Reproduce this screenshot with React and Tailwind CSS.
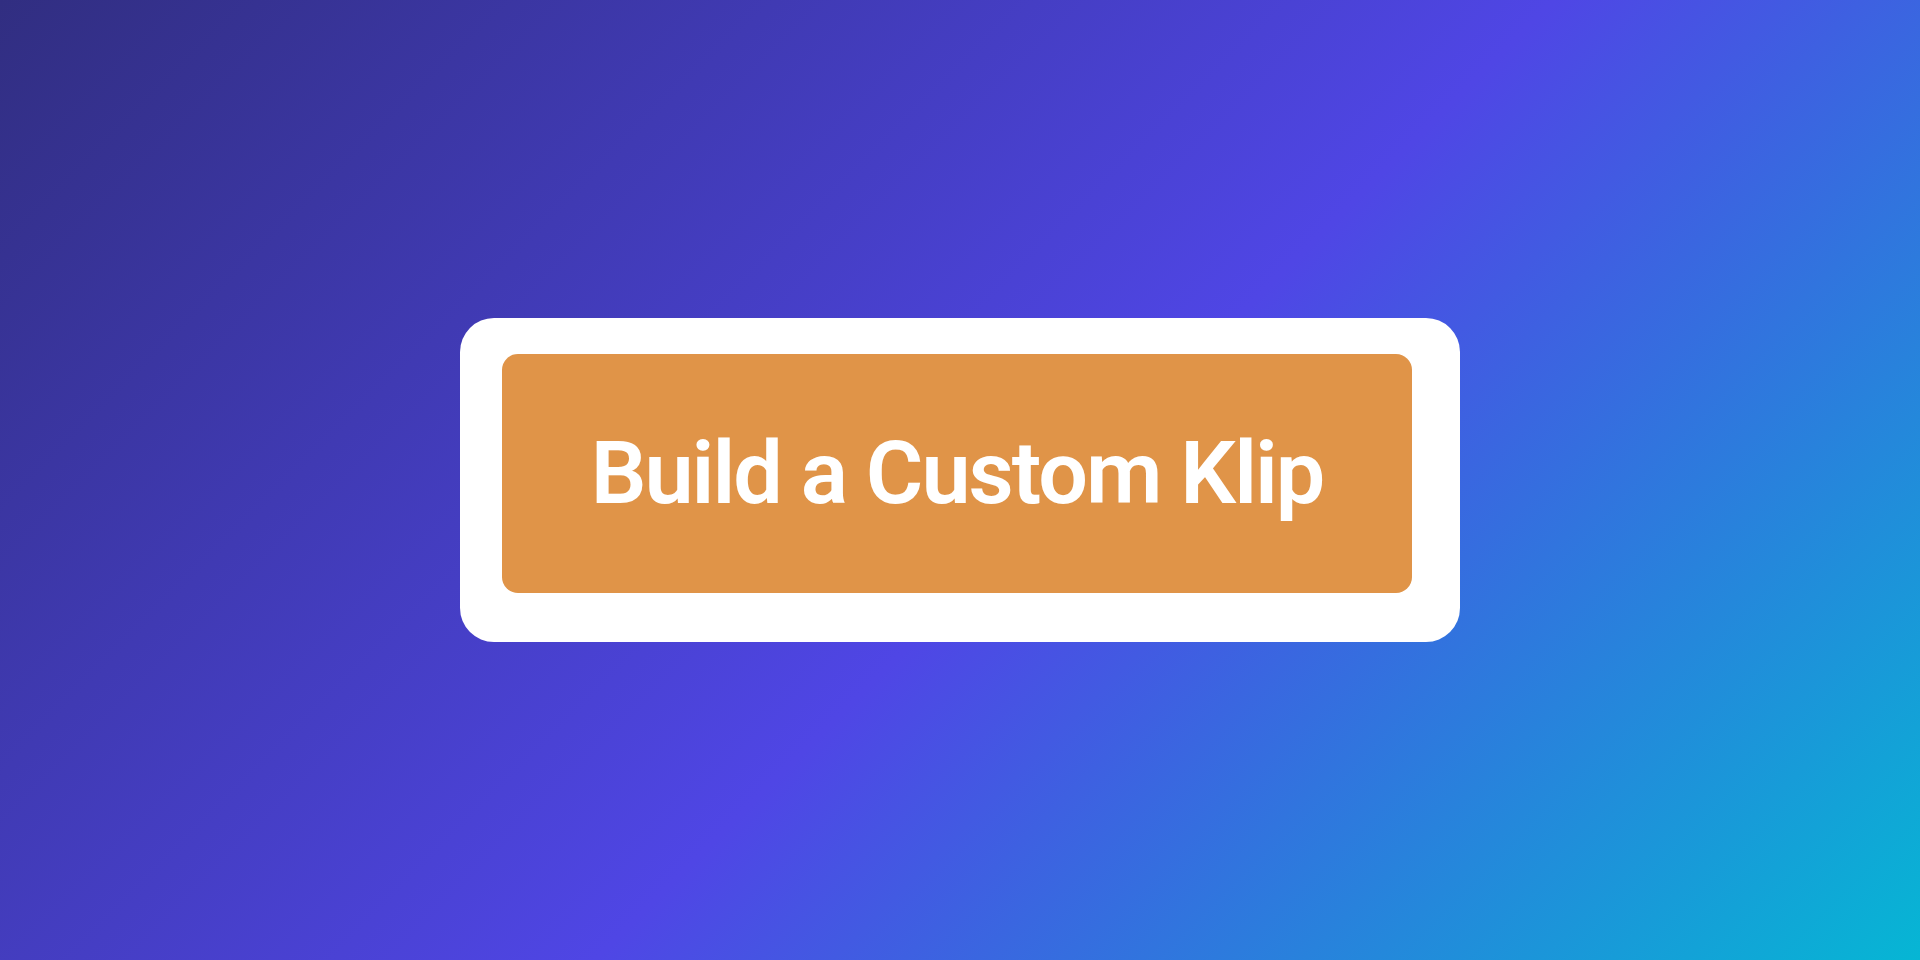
import React from "react";

const App = () => {
  return (
    <div className="w-full h-screen bg-[linear-gradient(135deg,#312e81_0%,#4f46e5_54%,#06b6d4_100%)] flex items-center justify-center overflow-hidden">
      {/* Card */}
      <div className="w-[1000px] h-[324px] bg-white rounded-[34px] pl-[42px] pr-[48px] pt-[36px] pb-[49px] flex">
        <button
          className="flex-1 bg-[#e09448] rounded-[16px] flex items-center justify-center pb-[2px] text-white text-[88px] font-semibold tracking-[-2px] font-['Roboto',sans-serif] leading-none"
          onClick={() => {}}
        >
          Build a Custom Klip
        </button>
      </div>
    </div>
  );
};

export default App;
